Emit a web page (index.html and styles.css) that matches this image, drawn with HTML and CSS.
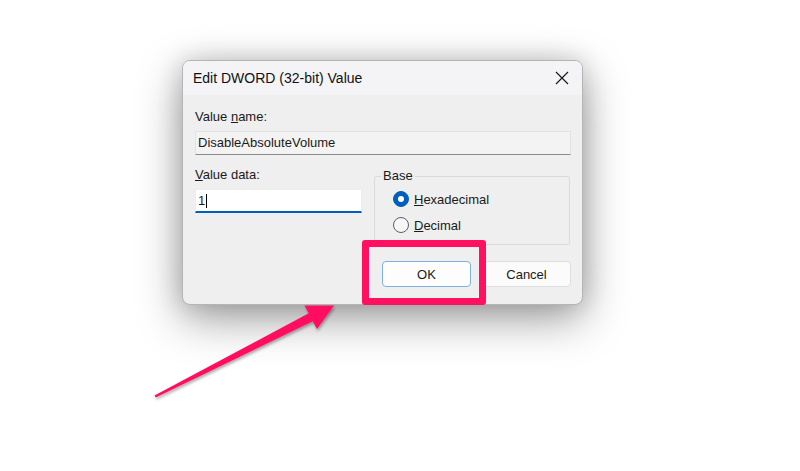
FILE: index.html
```html
<!DOCTYPE html>
<html lang="en">
  <head>
    <meta charset="UTF-8" />
    <meta name="viewport" content="width=device-width, initial-scale=1.0" />
    <title>Edit DWORD (32-bit) Value</title>
    <link rel="stylesheet" href="styles.css">
  </head>
  <body>
    <div class="dialog">
      <div class="dialog-titlebar">
        <span class="dialog-title">Edit DWORD (32-bit) Value</span>
        <svg class="close-icon" width="14" height="14" viewBox="0 0 14 14">
          <path d="M1 1 L13 13 M13 1 L1 13" stroke="#1a1a1a" stroke-width="1.2" fill="none" />
        </svg>
      </div>

      <div class="dialog-body">
        <div class="field-label">Value <u>n</u>ame:</div>
        <div class="text-box readonly">DisableAbsoluteVolume</div>

        <div class="data-row">
          <div class="data-col">
            <div class="field-label"><u>V</u>alue data:</div>
            <div class="text-box editable">1<span class="caret"></span></div>
          </div>

          <fieldset class="base-group">
            <legend>Base</legend>
            <div class="radio-row">
              <span class="radio checked"></span>
              <span><u>H</u>exadecimal</span>
            </div>
            <div class="radio-row">
              <span class="radio"></span>
              <span><u>D</u>ecimal</span>
            </div>
          </fieldset>
        </div>

        <div class="dialog-actions">
          <button type="button" class="btn btn-default">OK</button>
          <button type="button" class="btn">Cancel</button>
        </div>
      </div>
    </div>

    <!-- annotation overlays -->
    <div class="highlight-box"></div>
    <svg class="pointer-arrow" width="800" height="471" viewBox="0 0 800 471">
      <defs>
        <filter id="arrowShadow" x="-20%" y="-20%" width="140%" height="140%">
          <feDropShadow dx="1" dy="2" stdDeviation="1.5" flood-color="#000" flood-opacity="0.35" />
        </filter>
      </defs>
      <polygon
        points="154.5,395.5 308.7,313.3 304.5,305.5 334,305.5 317,329 312.7,321.3 155.8,397.6"
        fill="#ff1060"
        filter="url(#arrowShadow)"
      />
    </svg>
  </body>
</html>
```

FILE: styles.css
```css
* {
  box-sizing: border-box;
}

body {
  margin: 0;
  width: 800px;
  height: 471px;
  overflow: hidden;
  position: relative;
  background-color: #ffffff;
  font-family: "Liberation Sans", Arial, sans-serif;
  font-size: 13px;
  color: #1a1a1a;
}

.dialog {
  margin: 60px 0 0 182px;
  width: 401px;
  height: 245px;
  background-color: #efefef;
  border: 1px solid #b5b5b5;
  border-radius: 8px;
  overflow: hidden;
  box-shadow: 0 14px 45px rgba(0, 0, 0, 0.38), 0 0 24px rgba(0, 0, 0, 0.15);
}

.dialog-titlebar {
  height: 34px;
  display: flex;
  align-items: center;
  justify-content: space-between;
  padding: 0 13px 0 10px;
  background-color: #f4f4f6;
}

.dialog-title {
  font-size: 14px;
  color: #111111;
}

.close-icon {
  display: block;
}

.dialog-body {
  padding: 14px 11px 0 12px;
}

.field-label {
  height: 16px;
  line-height: 16px;
}

.text-box {
  margin-top: 6px;
  height: 24px;
  line-height: 22px;
  padding-left: 2px;
  white-space: nowrap;
}

.text-box.readonly {
  background-color: #f3f3f3;
  border: 1px solid #e2e2e2;
  border-bottom-color: #8a8a8a;
}

.text-box.editable {
  background-color: #ffffff;
  border: 1px solid #ececec;
  border-bottom: 2px solid #005fb8;
  display: flex;
  align-items: center;
  padding-left: 2px;
}

.caret {
  display: inline-block;
  width: 1px;
  height: 14px;
  margin-left: 1px;
  background-color: #000000;
}

.data-row {
  display: flex;
  gap: 12px;
  margin-top: 12px;
}

.data-col {
  width: 167px;
}

.base-group {
  margin: 1px 0 0 0;
  width: 196px;
  height: 77px;
  padding: 0 0 0 6px;
  border: 1px solid #dadada;
  border-radius: 2px;
}

.base-group legend {
  padding: 0 2px;
  line-height: 16px;
}

.radio-row {
  display: flex;
  align-items: center;
  gap: 5px;
  height: 20px;
  margin-left: 12px;
  margin-top: 5px;
}

.radio-row + .radio-row {
  margin-top: 6px;
}

.radio {
  width: 16px;
  height: 16px;
  border-radius: 50%;
  border: 1px solid #5f5f5f;
  background-color: #f7f7f7;
  display: flex;
  align-items: center;
  justify-content: center;
}

.radio.checked {
  border-color: #005fb8;
  background-color: #005fb8;
}

.radio.checked::after {
  content: "";
  width: 6px;
  height: 6px;
  border-radius: 50%;
  background-color: #ffffff;
}

.dialog-actions {
  display: flex;
  justify-content: flex-end;
  gap: 11px;
  margin-top: 16px;
}

.btn {
  width: 89px;
  height: 26px;
  border-radius: 4px;
  border: 1px solid #dedede;
  background-color: #fbfbfb;
  font-family: inherit;
  font-size: 13px;
  color: #1a1a1a;
  padding: 0;
}

.btn-default {
  border-color: #7db0e3;
  background-color: #fdfdfd;
}

.highlight-box {
  position: absolute;
  left: 362px;
  top: 240px;
  width: 124px;
  height: 65px;
  border: 7px solid #ff1060;
  border-radius: 3px;
}

.pointer-arrow {
  position: absolute;
  left: 0;
  top: 0;
}
```
